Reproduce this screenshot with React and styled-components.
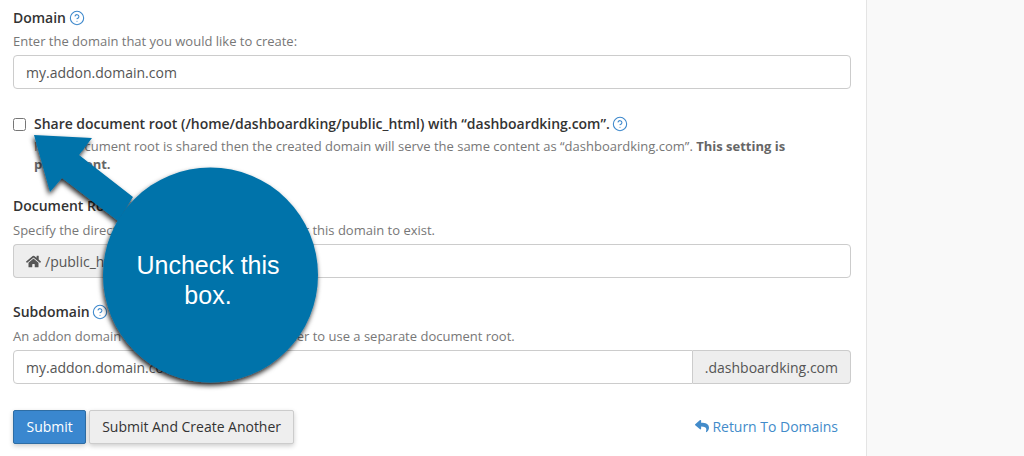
import React from 'react';
import styled, { createGlobalStyle } from 'styled-components';
import { CircleHelp } from 'lucide-react';
import { FaHome, FaReply } from 'react-icons/fa';

const GlobalStyle = createGlobalStyle`
  html, body {
    margin: 0;
    padding: 0;
    background: #f9f9f9;
    overflow: hidden;
  }
  * {
    box-sizing: border-box;
  }
`;

function Help() {
  return (
    <HelpIcon>
      <CircleHelp size={16} strokeWidth={1.6} color="#3d88cc" />
    </HelpIcon>
  );
}

export default function App() {
  return (
    <Page>
      <GlobalStyle />
      <Main>
        <Field>
          <Label>Domain <Help /></Label>
          <Hint>Enter the domain that you would like to create:</Hint>
          <InputBox>my.addon.domain.com</InputBox>
        </Field>

        <CheckRow>
          <CheckBox type="checkbox" />
          <CheckText>
            <Label>
              Share document root (/home/dashboardking/public_html) with “dashboardking.com”. <Help />
            </Label>
            <CheckHint>
              If the document root is shared then the created domain will serve the same content as “dashboardking.com”.{' '}
              <strong>This setting is permanent.</strong>
            </CheckHint>
          </CheckText>
        </CheckRow>

        <Field>
          <Label>Document Root</Label>
          <Hint>Specify the directory where you want the files for this domain to exist.</Hint>
          <InputGroup>
            <Addon $left>
              <FaHome size={15} color="#555" />
              /public_html/
            </Addon>
            <GroupInput $joined>my.addon.domain.com</GroupInput>
          </InputGroup>
        </Field>

        <Field>
          <Label>Subdomain <Help /></Label>
          <Hint>An addon domain requires a subdomain in order to use a separate document root.</Hint>
          <InputGroup>
            <GroupInput>my.addon.domain.com</GroupInput>
            <Addon>.dashboardking.com</Addon>
          </InputGroup>
        </Field>

        <Actions>
          <Button $primary>Submit</Button>
          <Button>Submit And Create Another</Button>
          <ReturnLink>
            <FaReply size={14} />
            Return To Domains
          </ReturnLink>
        </Actions>
      </Main>

      <Callout>
        <svg width="340" height="400" viewBox="0 0 340 400">
          <g filter="url(#callout-shadow)" fill="#0073aa">
            <path d="M34 135 L92 138 L79 155 L133 197 L118 221 L62 178 L50 192 Z" />
            <circle cx="210.500" cy="275" r="107.500" />
          </g>
          <defs>
            <filter id="callout-shadow" x="-10%" y="-10%" width="120%" height="120%">
              <feDropShadow dx="-1" dy="3" stdDeviation="2.500" floodColor="#000" floodOpacity="0.85" />
            </filter>
          </defs>
        </svg>
        <CalloutText>Uncheck this box.</CalloutText>
      </Callout>
    </Page>
  );
}

const Page = styled.div`
  position: relative;
  width: 1024px;
  height: 456px;
  overflow: hidden;
  font-family: 'Open Sans', sans-serif;
  color: #333;
`;

const Main = styled.main`
  width: 867px;
  height: 456px;
  padding: 8px 15px 0 13px;
  background: #fff;
  border-right: 1px solid #e4e4e4;
`;

const Label = styled.div`
  font-size: 14px;
  line-height: 20px;
  font-weight: 600;
  letter-spacing: -0.02px;
  color: #333;
`;

const HelpIcon = styled.span`
  display: inline-block;
  margin-left: -1px;
  vertical-align: -3px;
  line-height: 0;
`;

const Hint = styled.div`
  margin-top: 4px;
  margin-bottom: 4px;
  font-size: 13px;
  line-height: 20px;
  color: #777;
`;

const Field = styled.div`
  margin-bottom: 24px;

  &:first-child ${Hint} {
    margin-top: 3px;
  }
`;

const InputBox = styled.div`
  display: flex;
  align-items: center;
  height: 34px;
  padding: 0 12px;
  font-size: 14px;
  color: #555;
  background: #fff;
  border: 1px solid #ccc;
  border-radius: 4px;
`;

const CheckRow = styled.div`
  display: flex;
  align-items: flex-start;
  margin-top: 25px;
  margin-bottom: 23px;
`;

const CheckBox = styled.input`
  width: 13px;
  height: 13px;
  margin: 4px 8px 0 0;
  flex: none;
`;

const CheckText = styled.div`
  width: 760px;
`;

const CheckHint = styled.div`
  margin-top: 3px;
  font-size: 13px;
  line-height: 18px;
  color: #777;

  strong {
    font-weight: 700;
    color: #666;
  }
`;

const InputGroup = styled.div`
  display: flex;
  height: 34px;
`;

const GroupInput = styled.div`
  flex: 1;
  display: flex;
  align-items: center;
  padding: 0 12px;
  font-size: 14px;
  color: #555;
  background: #fff;
  border: 1px solid #ccc;
  border-radius: ${props => (props.$joined ? '0 4px 4px 0' : '4px 0 0 4px')};
`;

const Addon = styled.div`
  display: flex;
  align-items: center;
  gap: 4px;
  padding: 0 12px;
  font-size: 14px;
  color: #555;
  background: #eee;
  border: 1px solid #ccc;
  border-left-width: ${props => (props.$left ? '1px' : '0')};
  border-right-width: ${props => (props.$left ? '0' : '1px')};
  border-radius: ${props => (props.$left ? '4px 0 0 4px' : '0 4px 4px 0')};
`;

const Actions = styled.div`
  display: flex;
  align-items: center;
  gap: 3px;
  margin-top: 26px;
`;

const Button = styled.button`
  height: 34px;
  padding: 0 ${props => (props.$primary ? '12.5px' : '12px')} 2px;
  font-family: inherit;
  font-size: 14px;
  letter-spacing: -0.02px;
  color: ${props => (props.$primary ? '#fff' : '#333')};
  background: ${props => (props.$primary ? '#3a87cf' : '#eee')};
  border: 1px solid ${props => (props.$primary ? '#2e6da4' : '#ccc')};
  border-radius: 2px;
  box-shadow: 0 2px 5px rgba(0, 0, 0, 0.2);
`;

const ReturnLink = styled.a`
  display: flex;
  align-items: center;
  gap: 3px;
  margin-left: auto;
  margin-right: 13px;
  padding-bottom: 2px;
  font-size: 14px;
  letter-spacing: -0.02px;
  color: #428bca;
`;

const Callout = styled.div`
  position: absolute;
  left: 0;
  top: 0;
  width: 340px;
  height: 400px;
`;

const CalloutText = styled.div`
  position: absolute;
  left: 118px;
  top: 250px;
  width: 180px;
  font-family: 'Liberation Sans', Arial, sans-serif;
  font-size: 25px;
  line-height: 30px;
  text-align: center;
  color: #fff;
`;
